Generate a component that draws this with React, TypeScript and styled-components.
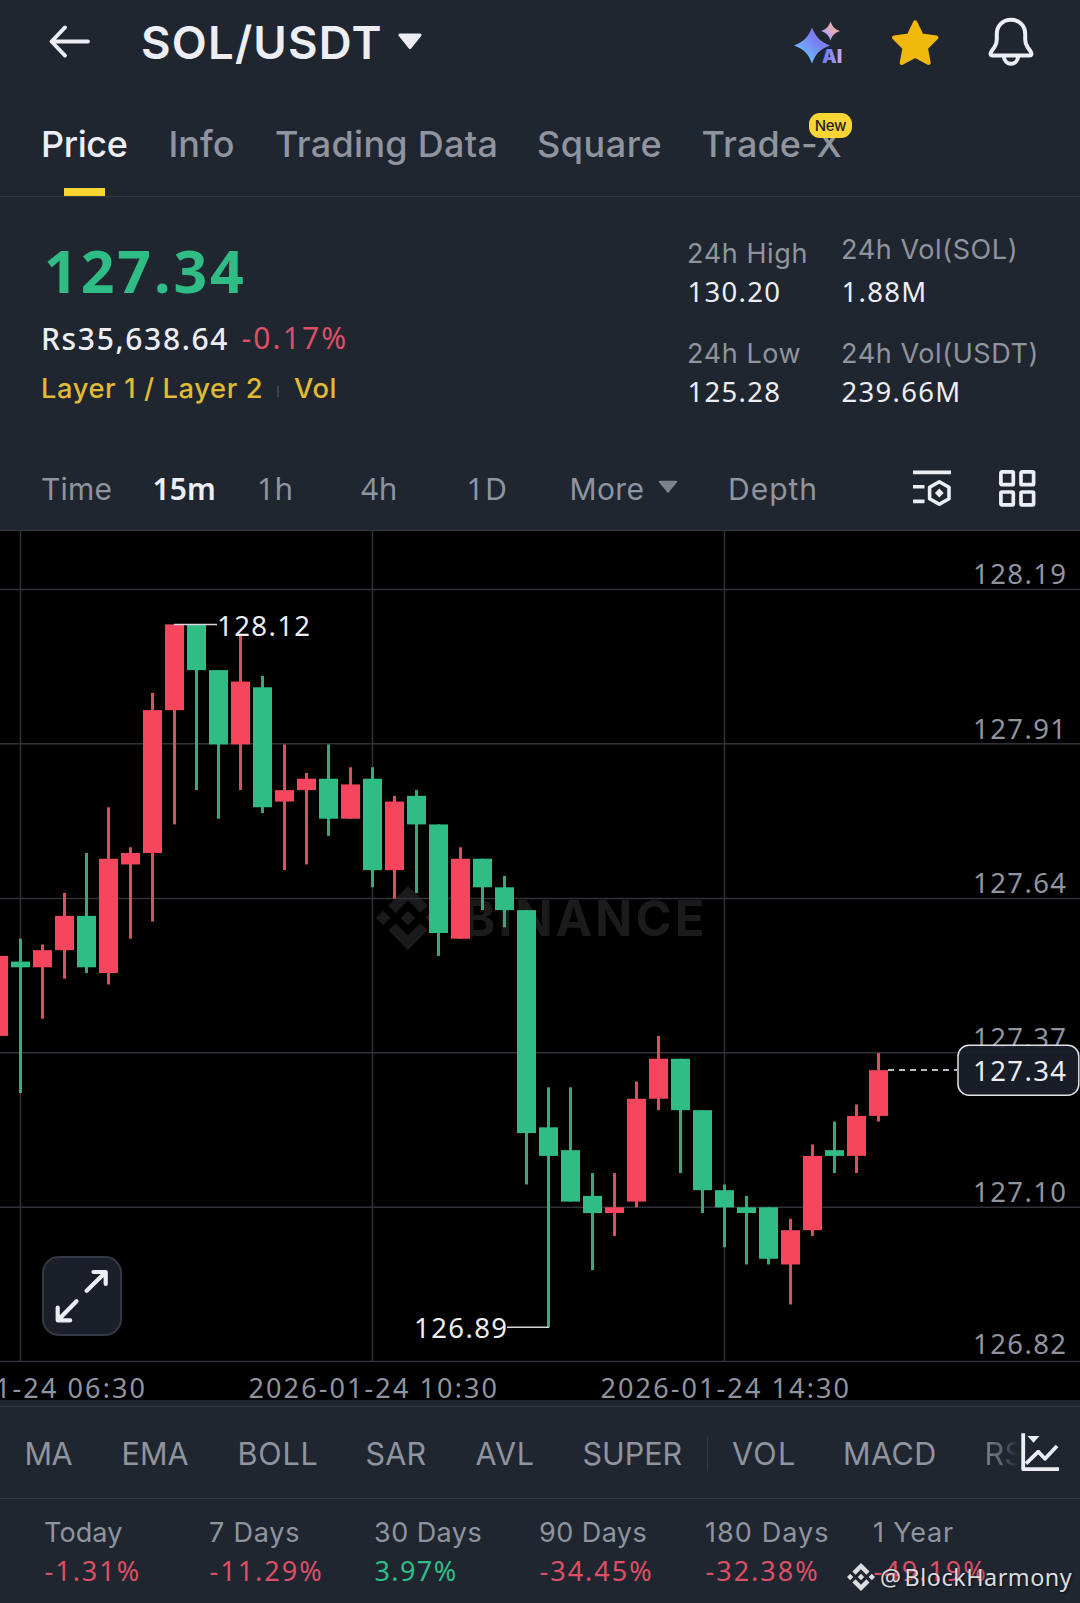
import React from 'react';
import styled, { createGlobalStyle } from 'styled-components';

const color = {
  panel: '#1f2630',
  line: '#333a45',
  text: '#eceef4',
  muted: '#8f949f',
  up: '#2fbd85',
  down: '#f6465d',
  loss: '#dd4f64',
  accent: '#fcd535',
  gold: '#f0b90b',
};

const words = '"Inter", "Liberation Sans", sans-serif';
const digits = '"Noto Sans", "Liberation Sans", sans-serif';

const GlobalStyle = createGlobalStyle`
  * { box-sizing: border-box; }
  body { margin: 0; background: ${color.panel}; }
  svg { display: block; flex: none; }
`;

const Page = styled.main`
  position: relative;
  display: flex;
  flex-direction: column;
  width: 1080px;
  height: 1603px;
  overflow: hidden;
  background: ${color.panel};
  color: ${color.text};
  font-family: ${words};
  white-space: nowrap;
`;

/* ---------- header ---------- */

const Header = styled.header`
  display: flex;
  align-items: center;
  height: 85px;
  padding: 0 46px 2px 49px;
`;

const Pair = styled.h1`
  margin: 2px 0 0 51px;
  font-size: 45.5px;
  font-weight: 600;
  line-height: 60px;
  letter-spacing: 1.2px;
`;

const PairCaret = styled.svg`
  margin-left: 15px;
`;

const Actions = styled.div`
  display: flex;
  align-items: center;
  gap: 49px;
  margin-left: auto;
`;

/* ---------- tabs ---------- */

const Tabs = styled.nav`
  display: grid;
  grid-template-columns: 127.5px 106.5px 262px 164.5px auto;
  height: 112px;
  padding-left: 41px;
  border-bottom: 1px solid ${color.line};
`;

const Tab = styled.div<{ $active?: boolean; $track: number }>`
  position: relative;
  padding-top: 37px;
  font-size: 36px;
  font-weight: 500;
  line-height: 44px;
  letter-spacing: ${(p) => p.$track}px;
  color: ${(p) => (p.$active ? color.text : color.muted)};
  &::after {
    content: '';
    display: ${(p) => (p.$active ? 'block' : 'none')};
    position: absolute;
    left: 23px;
    bottom: 0;
    width: 41px;
    height: 8.5px;
    background: ${color.accent};
  }
`;

const Badge = styled.span`
  position: absolute;
  left: 107.5px;
  top: 28px;
  width: 43px;
  height: 25px;
  border-radius: 11px;
  background: ${color.accent};
  color: #1f2228;
  font-size: 15px;
  font-weight: 500;
  line-height: 25px;
  letter-spacing: -0.3px;
  text-align: center;
`;

/* ---------- price summary ---------- */

const Summary = styled.section`
  display: flex;
  justify-content: space-between;
  height: 251px;
  padding-left: 41px;
`;

const PriceColumn = styled.div`
  display: flex;
  flex-direction: column;
  padding-top: 41px;
`;

const LastPrice = styled.div`
  padding-left: 3px;
  font: 700 59px/64px ${digits};
  letter-spacing: 2.9px;
  color: ${color.up};
`;

const FiatRow = styled.div`
  display: grid;
  grid-template-columns: 200.5px auto;
  margin-top: 17px;
  font: 500 30px/40px ${digits};
  letter-spacing: 1.65px;
`;

const DayChange = styled.span`
  margin-top: -1px;
  font-weight: 400;
  letter-spacing: 2.1px;
  color: ${color.loss};
`;

const TagRow = styled.div`
  display: grid;
  grid-template-columns: 236px 17px auto;
  align-items: center;
  margin-top: 13px;
  font-size: 27.3px;
  font-weight: 500;
  line-height: 34px;
  letter-spacing: 0.6px;
  color: #e3ba33;
`;

const TagRule = styled.span`
  width: 2px;
  height: 11px;
  margin-top: 4px;
  background: #3a414c;
`;

const StatsGrid = styled.div`
  display: grid;
  grid-template-columns: 154px 239px;
  grid-auto-rows: 74px;
  row-gap: 26px;
  padding-top: 39px;
`;

const StatLabel = styled.div<{ $lift?: boolean }>`
  margin-top: ${(p) => (p.$lift ? -4 : 0)}px;
  margin-bottom: ${(p) => (p.$lift ? 6 : 2)}px;
  font-size: 27px;
  line-height: 36px;
  letter-spacing: 0.6px;
  color: ${color.muted};
`;

const StatValue = styled.div`
  padding-left: 0.5px;
  font: 400 27.5px/36px ${digits};
  letter-spacing: 1.3px;
`;

/* ---------- intervals ---------- */

const Intervals = styled.nav`
  display: grid;
  grid-template-columns: 111.5px 104.5px 104px 105.5px 103px 158.5px 185px 86px auto;
  align-items: center;
  height: 83px;
  padding-left: 41px;
  border-bottom: 1px solid ${color.line};
`;

const Interval = styled.div<{ $numeric?: boolean; $active?: boolean; $track?: number }>`
  display: flex;
  align-items: center;
  font-family: ${(p) => (p.$numeric ? digits : words)};
  font-size: 30px;
  font-weight: ${(p) => (p.$active ? 600 : 400)};
  line-height: 40px;
  letter-spacing: ${(p) => p.$track ?? 0.2}px;
  color: ${(p) => (p.$active ? color.text : color.muted)};
`;

const MoreCaret = styled.svg`
  margin: -4px 0 0 13.5px;
`;

const IntervalTool = styled.div`
  margin-top: -2px;
`;

/* ---------- chart ---------- */

const ChartArea = styled.section`
  position: relative;
  height: 869px;
  background: #000;
`;

const AxisText = styled.text`
  font: 400 27.5px ${digits};
  letter-spacing: 1.4px;
  fill: ${color.muted};
`;

const DateText = styled(AxisText)`
  font-size: 27px;
  letter-spacing: 2.1px;
`;

const MarkText = styled(AxisText)`
  fill: ${color.text};
`;

const BrandText = styled.text`
  font: 700 49px ${words};
  letter-spacing: 3px;
  fill: #1b1b1c;
`;

const ExpandButton = styled.button`
  position: absolute;
  left: 42px;
  top: 725px;
  width: 80px;
  height: 80px;
  padding: 0;
  border: 2px solid #323945;
  border-radius: 17px;
  background: #1a1f2a;
`;

/* ---------- indicators ---------- */

const Indicators = styled.nav`
  display: grid;
  grid-template-columns: 97px 116px 128px 110px 107px 124px 25.5px 111px 141.5px 35px auto;
  align-items: center;
  height: 93px;
  margin-top: 6px;
  padding: 3px 0 0 24.5px;
  border-top: 1px solid ${color.line};
  border-bottom: 1px solid ${color.line};
`;

const Indicator = styled.span<{ $track: number; $fade?: boolean }>`
  overflow: ${(p) => (p.$fade ? 'hidden' : 'visible')};
  font-size: 30.5px;
  line-height: 40px;
  letter-spacing: ${(p) => p.$track}px;
  color: ${color.muted};
  mask-image: ${(p) => (p.$fade ? 'linear-gradient(90deg, rgba(0,0,0,0.8), rgba(0,0,0,0.55) 50%, transparent 95%)' : 'none')};
`;

const IndicatorRule = styled.span`
  width: 1px;
  height: 34px;
  background: ${color.line};
`;

const IndicatorTool = styled.div`
  margin-top: -4px;
`;

/* ---------- returns ---------- */

const Returns = styled.section`
  display: grid;
  grid-template-columns: 165px 165px 165px 166px 168px auto;
  padding: 16px 0 0 44px;
`;

const ReturnLabel = styled.div<{ $track: number }>`
  font-size: 27px;
  line-height: 36px;
  letter-spacing: ${(p) => p.$track}px;
  color: ${color.muted};
`;

const ReturnValue = styled.div<{ $up?: boolean }>`
  margin-top: 2px;
  padding-left: 0.5px;
  font: 400 27px/36px ${digits};
  letter-spacing: ${(p) => (p.$up ? 1.4 : 2)}px;
  color: ${(p) => (p.$up ? color.up : color.loss)};
`;

const Credit = styled.div`
  position: absolute;
  left: 847px;
  top: 1560px;
  display: flex;
  align-items: center;
  gap: 5px;
  height: 34px;
  font: 400 23.4px/34px ${digits};
  letter-spacing: 0.5px;
  word-spacing: -3.5px;
  color: #dcdde0;
  text-shadow: 1px 1px 2px rgba(0, 0, 0, 0.6);
`;

const BINANCE_MARK =
  'M16.624 13.9202l2.7175 2.7154-7.353 7.353-7.353-7.352 2.7175-2.7164 4.6355 4.6595 4.6356-4.6595zm4.6366-4.6366L24 12l-2.7154 2.7164L18.5682 12l2.6924-2.7164zm-9.272.001l2.7163 2.6914-2.7164 2.7174v-.001L9.2721 12l2.7164-2.7154zm-9.2722-.001L5.4088 12l-2.6914 2.6924L0 12l2.7164-2.7164zM11.9885.0115l7.353 7.329-2.7174 2.7154-4.6356-4.6356-4.6355 4.6595-2.7174-2.7154 7.353-7.353z';

/* Each candle: direction, then high, body top, body bottom and low in cents below the 128.12 peak. */
type Candle = ['u' | 'd', number, number, number, number];

const candles: Candle[] = [
  ['d', 58, 58, 72, 72],
  ['u', 55, 59, 60, 82],
  ['d', 56, 57, 60, 69],
  ['d', 47, 51, 57, 62],
  ['u', 40, 51, 60, 61],
  ['d', 32, 41, 61, 63],
  ['d', 39, 40, 42, 55],
  ['d', 12, 15, 40, 52],
  ['d', 0, 0, 15, 35],
  ['u', 0, 0, 8, 29],
  ['u', 8, 8, 21, 34],
  ['d', 2, 10, 21, 29],
  ['u', 9, 11, 32, 33],
  ['d', 21, 29, 31, 43],
  ['d', 26, 27, 29, 42],
  ['u', 21, 27, 34, 37],
  ['d', 25, 28, 34, 34],
  ['u', 25, 27, 43, 46],
  ['d', 30, 31, 43, 48],
  ['u', 29, 30, 35, 47],
  ['u', 35, 35, 54, 58],
  ['d', 39, 41, 55, 55],
  ['u', 41, 41, 46, 50],
  ['u', 44, 46, 50, 53],
  ['u', 50, 50, 89, 98],
  ['u', 81, 88, 93, 123],
  ['u', 81, 92, 101, 101],
  ['u', 96, 100, 103, 113],
  ['d', 96, 102, 103, 107],
  ['d', 80, 83, 101, 102],
  ['d', 72, 76, 83, 85],
  ['u', 76, 76, 85, 96],
  ['u', 85, 85, 99, 103],
  ['u', 98, 99, 102, 109],
  ['u', 100, 102, 103, 112],
  ['u', 102, 102, 111, 112],
  ['d', 104, 106, 112, 119],
  ['d', 91, 93, 106, 107],
  ['u', 87, 92, 93, 96],
  ['d', 84, 86, 93, 96],
  ['d', 75, 78, 86, 87],
];

const yAt = (cents: number) => 624.4 + cents * 5.715;

const priceLines: [string, number, number][] = [
  ['128.19', 589.5, 584],
  ['127.91', 743.8, 738.5],
  ['127.64', 898.5, 893],
  ['127.37', 1052.7, 1047.5],
  ['127.10', 1207.2, 1202],
  ['126.82', 1361.5, 1353.7],
];

const timeLines: [string, number, number][] = [
  ['2026-01-24 06:30', 20.5, -103.5],
  ['2026-01-24 10:30', 372.5, 248.5],
  ['2026-01-24 14:30', 724.5, 600.5],
];

function Chart() {
  return (
    <svg width="1080" height="869" viewBox="0 531 1080 869">
      <g fill="#1b1b1c" transform="translate(376 886) scale(2.667)">
        <path d={BINANCE_MARK} />
      </g>
      <BrandText x="463" y="936">BINANCE</BrandText>
      <g stroke="#303238" strokeWidth="1.5">
        {priceLines.map(([label, y]) => (
          <line key={label} x1="0" x2="1080" y1={y} y2={y} />
        ))}
        {timeLines.map(([label, x]) => (
          <line key={label} x1={x} x2={x} y1="531" y2="1361.5" />
        ))}
      </g>
      {candles.map(([dir, high, top, bottom, low], i) => {
        const x = 20.5 + 22 * (i - 1);
        const up = dir === 'u';
        return (
          <g key={i}>
            <rect x={x - 1.5} y={yAt(high)} width="3" height={yAt(low) - yAt(high)} fill={up ? '#3aa87c' : '#d9505f'} />
            <rect x={x - 9.5} y={yAt(top)} width="19" height={yAt(bottom) - yAt(top)} fill={up ? color.up : color.down} />
          </g>
        );
      })}
      {priceLines.map(([label, , y]) => (
        <AxisText key={label} x="973" y={y}>{label}</AxisText>
      ))}
      {timeLines.map(([label, , x]) => (
        <DateText key={label} x={x} y="1397.7">{label}</DateText>
      ))}
      <path d="M174 624.6H217M507 1327.2H549" stroke="#d5d7dc" strokeWidth="1.5" />
      <MarkText x="217" y="635.8">128.12</MarkText>
      <MarkText x="414" y="1338">126.89</MarkText>
      <path d="M888 1070H957" stroke="#b9bcc2" strokeWidth="1.8" strokeDasharray="6 5" />
      <rect x="958" y="1045.3" width="120.8" height="50" rx="11" fill="#1a1f2a" fillOpacity="0.94" stroke="#dfe1e6" strokeWidth="1.5" />
      <MarkText x="973" y="1081">127.34</MarkText>
    </svg>
  );
}

function BackIcon() {
  return (
    <svg width="41" height="33" viewBox="0 0 41 33" fill="none" stroke={color.text} strokeWidth="3.8" strokeLinecap="round" strokeLinejoin="round">
      <path d="M16 2.4 2.5 16.5 16 30.6M3 16.5H39" />
    </svg>
  );
}

function AiIcon() {
  return (
    <svg width="48" height="48" viewBox="0 0 48 48">
      <defs>
        <linearGradient id="spark" x1="0" y1="1" x2="1" y2="0">
          <stop offset="0.3" stopColor="#6fb0fb" />
          <stop offset="0.6" stopColor="#7b7ff2" />
        </linearGradient>
        <linearGradient id="sparkle" x1="0" y1="1" x2="1" y2="0">
          <stop offset="0.3" stopColor="#b9a2ee" />
          <stop offset="0.7" stopColor="#eeb0a4" />
        </linearGradient>
        <linearGradient id="letters" x1="0" x2="1">
          <stop offset="0.3" stopColor="#7b7ff5" />
          <stop offset="1" stopColor="#cda6e6" />
        </linearGradient>
      </defs>
      <path fill="url(#spark)" d="M18 9.5C21.5 18.5 26 23.5 36 27.5C26 31 21.5 36 18 45.5C14.5 36 10 31 0 27.5C10 23.5 14.5 18.5 18 9.5Z" />
      <path fill="url(#sparkle)" d="M36.5 3.5C38.3 8.6 40.6 11 46 13C40.6 14.9 38.3 17.3 36.5 22.5C34.7 17.3 32.4 14.9 27 13C32.4 11 34.7 8.6 36.5 3.5Z" />
      <text x="28" y="45" fontFamily="Inter, sans-serif" fontWeight="900" fontSize="18.5" fill="url(#letters)" stroke={color.panel} strokeWidth="2.5" paintOrder="stroke">AI</text>
    </svg>
  );
}

function StarIcon() {
  return (
    <svg width="48" height="48" viewBox="0 0 48 48">
      <path
        d="M24.2 4.5 30.6 17.6 45.3 19.6 34.8 30 37.6 44.8 24.2 37.6 10.8 44.8 13.6 30 3.1 19.6 17.8 17.6Z"
        fill={color.gold}
        stroke={color.gold}
        strokeWidth="4.2"
        strokeLinejoin="round"
      />
    </svg>
  );
}

function BellIcon() {
  return (
    <svg width="46" height="50" viewBox="0 0 46 50" fill="none" stroke={color.text} strokeWidth="4" strokeLinejoin="round">
      <path d="M23 2.8C14.5 2.8 8.8 9 8.8 17V22.5C8.8 26 7.8 28 6.5 30L3.3 34.7C2 36.9 2.4 38.5 4.4 38.5H41.6C43.6 38.5 44 36.9 42.7 34.7L39.5 30C38.2 28 37.2 26 37.2 22.5V17C37.2 9 31.5 2.8 23 2.8Z" />
      <path d="M15.8 39.5C16.3 44 19.4 46.8 23 46.8C26.6 46.8 29.7 44 30.2 39.5" />
    </svg>
  );
}

function ChartSettingsIcon() {
  return (
    <svg width="38" height="37" viewBox="0 0 38 37" fill="none" stroke={color.text} strokeWidth="3.6" strokeLinejoin="round">
      <path d="M0 2.4H38M0 16.8H11.5M0 31.4H11.5" />
      <path d="M26.3 11.8 36 17.3V28.7L26.3 34.3 16.6 28.7V17.3Z" />
      <path d="M26.3 18.6 30.7 23 26.3 27.4 21.9 23Z" fill={color.text} stroke="none" />
    </svg>
  );
}

function LayoutIcon() {
  return (
    <svg width="37" height="37" viewBox="0 0 37 37" fill="none" stroke={color.text} strokeWidth="3.7">
      <rect x="1.9" y="1.9" width="12.4" height="12.8" rx="1" />
      <rect x="22" y="1.9" width="12.6" height="12.8" rx="1" />
      <rect x="1.9" y="22" width="12.4" height="12.8" rx="1" />
      <rect x="22" y="22" width="12.6" height="12.8" rx="1" />
    </svg>
  );
}

function TrendIcon() {
  return (
    <svg width="40" height="40" viewBox="0 0 40 40" fill="none" stroke={color.text} strokeWidth="3.8" strokeLinejoin="round">
      <path d="M3.2 1.2V37.2H39" />
      <path d="M6 31.7 18.3 19.7 25 26.8 37 14" />
      <path d="M7.5 4H19.5L13.5 10.7Z" fill={color.text} stroke="none" />
    </svg>
  );
}

function ExpandIcon() {
  return (
    <svg width="76" height="76" viewBox="2.5 2 76 76" fill="none" stroke={color.text} strokeWidth="4.2" strokeLinecap="round" strokeLinejoin="round">
      <path d="M45.2 34.7 64 16.2M52 16H64.2V28" />
      <path d="M35 45.2 16.4 64.2M16.2 51.5V64.3H28.7" />
    </svg>
  );
}

const tabs: [string, number][] = [
  ['Price', -0.41],
  ['Info', 0],
  ['Trading Data', 0.28],
  ['Square', 0.55],
  ['Trade-X', 0.1],
];

const stats: [string, string][] = [
  ['24h High', '130.20'],
  ['24h Vol(SOL)', '1.88M'],
  ['24h Low', '125.28'],
  ['24h Vol(USDT)', '239.66M'],
];

const returns: [string, string, number][] = [
  ['Today', '-1.31%', 0.1],
  ['7 Days', '-11.29%', 0.8],
  ['30 Days', '3.97%', 0.45],
  ['90 Days', '-34.45%', 0.45],
  ['180 Days', '-32.38%', 1.08],
  ['1 Year', '-49.19%', 0.8],
];

export default function App() {
  return (
    <Page>
      <GlobalStyle />
      <Header>
        <BackIcon />
        <Pair>SOL/USDT</Pair>
        <PairCaret width="24" height="17" viewBox="0 0 24 17">
          <path d="M2 2H22L12 14.5Z" fill={color.text} stroke={color.text} strokeWidth="3" strokeLinejoin="round" />
        </PairCaret>
        <Actions>
          <AiIcon />
          <StarIcon />
          <BellIcon />
        </Actions>
      </Header>

      <Tabs>
        {tabs.map(([label, track], i) => (
          <Tab key={label} $active={i === 0} $track={track}>
            {label}
            {label === 'Trade-X' && <Badge>New</Badge>}
          </Tab>
        ))}
      </Tabs>

      <Summary>
        <PriceColumn>
          <LastPrice>127.34</LastPrice>
          <FiatRow>
            <span>Rs35,638.64</span>
            <DayChange>-0.17%</DayChange>
          </FiatRow>
          <TagRow>
            <span>Layer 1 / Layer 2</span>
            <TagRule />
            <span>Vol</span>
          </TagRow>
        </PriceColumn>
        <StatsGrid>
          {stats.map(([label, value], i) => (
            <div key={label}>
              <StatLabel $lift={i === 1}>{label}</StatLabel>
              <StatValue>{value}</StatValue>
            </div>
          ))}
        </StatsGrid>
      </Summary>

      <Intervals>
        <Interval>Time</Interval>
        <Interval $numeric $active $track={0.1}>15m</Interval>
        <Interval $numeric $track={0.4}>1h</Interval>
        <Interval $numeric $track={0.6}>4h</Interval>
        <Interval $numeric $track={1.3}>1D</Interval>
        <Interval $track={0.37}>
          More
          <MoreCaret width="20" height="14" viewBox="0 0 20 14">
            <path d="M1.5 1.5H18.5L10 12Z" fill="#7d828d" stroke="#7d828d" strokeWidth="1.6" strokeLinejoin="round" />
          </MoreCaret>
        </Interval>
        <Interval $track={1}>Depth</Interval>
        <IntervalTool>
          <ChartSettingsIcon />
        </IntervalTool>
        <IntervalTool>
          <LayoutIcon />
        </IntervalTool>
      </Intervals>

      <ChartArea>
        <Chart />
        <ExpandButton aria-label="Expand chart">
          <ExpandIcon />
        </ExpandButton>
      </ChartArea>

      <Indicators>
        <Indicator $track={-0.5}>MA</Indicator>
        <Indicator $track={0.06}>EMA</Indicator>
        <Indicator $track={0.83}>BOLL</Indicator>
        <Indicator $track={0.19}>SAR</Indicator>
        <Indicator $track={0.6}>AVL</Indicator>
        <Indicator $track={0}>SUPER</Indicator>
        <IndicatorRule />
        <Indicator $track={1.3}>VOL</Indicator>
        <Indicator $track={0.5}>MACD</Indicator>
        <Indicator $track={0.3} $fade>RSI</Indicator>
        <IndicatorTool>
          <TrendIcon />
        </IndicatorTool>
      </Indicators>

      <Returns>
        {returns.map(([label, value, track]) => (
          <div key={label}>
            <ReturnLabel $track={track}>{label}</ReturnLabel>
            <ReturnValue $up={!value.startsWith('-')}>{value}</ReturnValue>
          </div>
        ))}
      </Returns>

      <Credit>
        <svg width="28" height="28" viewBox="0 0 24 24" fill="#dcdde0">
          <path d={BINANCE_MARK} />
        </svg>
        @ BlockHarmony
      </Credit>
    </Page>
  );
}
